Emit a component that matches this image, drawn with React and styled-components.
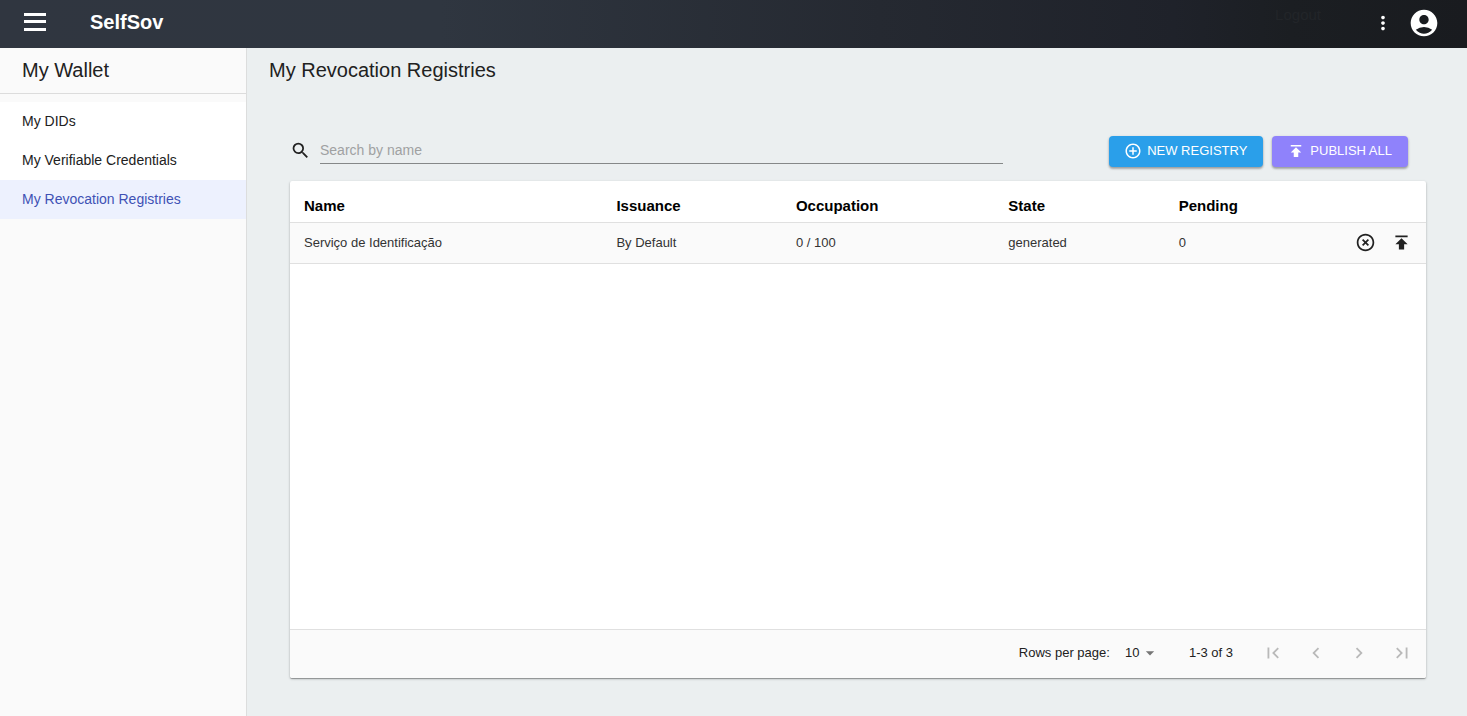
import React from "react";
import styled, { createGlobalStyle } from "styled-components";
import {
  MdSearch,
  MdMoreVert,
  MdAccountCircle,
  MdPublish,
  MdAddCircleOutline,
  MdHighlightOff,
  MdArrowDropDown,
  MdFirstPage,
  MdLastPage,
  MdChevronLeft,
  MdChevronRight,
} from "react-icons/md";

const GlobalStyle = createGlobalStyle`
  *, *::before, *::after { box-sizing: border-box; }
  body {
    margin: 0;
    background: #ebeff0;
    color: #212121;
    font-family: "Liberation Sans", Arial, sans-serif;
    font-size: 13px;
  }
  button, input, select { font: inherit; color: inherit; }
  button { cursor: pointer; }
`;

const Page = styled.div`
  display: flex;
  flex-direction: column;
  min-height: 100vh;
`;

const TopBar = styled.header`
  display: flex;
  align-items: center;
  height: 48px;
  padding: 0 24px;
  background: linear-gradient(90deg, #303640 0%, #2f3640 30%, #252931 60%, #1f222a 80%, #1b1e22 88%, #191b1f 100%);
  color: #fff;
`;

const PlainButton = styled.button`
  display: flex;
  align-items: center;
  justify-content: center;
  flex: none;
  width: ${(p) => p.$width || 36}px;
  height: 36px;
  padding: 0;
  border: 0;
  background: none;
  color: ${(p) => p.$color || "inherit"};
`;

const Brand = styled.div`
  flex: 1;
  padding: 0 0 4px 44px;
  font-size: 20px;
  line-height: 24px;
  font-weight: 700;
`;

const Logout = styled.a`
  margin-right: 44px;
  padding-bottom: 18px;
  color: #222529;
  font-size: 15px;
  line-height: 16px;
  text-decoration: none;
`;

const Account = styled.div`
  display: flex;
  gap: 5px;
  margin-right: 1px;
  padding-bottom: 2px;
`;

const Body = styled.div`
  display: flex;
  flex: 1;
`;

const Sidebar = styled.aside`
  flex: none;
  width: 247px;
  border-right: 1px solid #dcdddd;
  background: #fafafa;
`;

const Heading = styled.h2`
  margin: 0;
  padding: 0 22px;
  font-size: 20px;
  line-height: 45px;
  font-weight: 400;
`;

const SidebarHead = styled.div`
  border-bottom: 1px solid #dcdcdc;
`;

const NavList = styled.nav`
  display: flex;
  flex-direction: column;
  padding-top: 8px;
`;

const NavLink = styled.a`
  padding: 0 22px 1px;
  background: ${(p) => (p.$active ? "#edf1fe" : "#fff")};
  color: ${(p) => (p.$active ? "#3f51b5" : "#212121")};
  font-size: 14px;
  line-height: 38px;
  text-decoration: none;
`;

const Main = styled.main`
  display: flex;
  flex: 1;
  flex-direction: column;
  min-width: 0;
  padding-bottom: 38px;
`;

const Content = styled.div`
  display: flex;
  flex: 1;
  flex-direction: column;
  margin: 0 41px 0 43px;
`;

const Toolbar = styled.div`
  display: flex;
  align-items: flex-start;
  gap: 9px;
  margin: 43px 18px 14px 0;
`;

const SearchField = styled.label`
  display: flex;
  align-items: center;
  flex: 0 1 713px;
  min-width: 0;
  height: 28px;
  margin-right: auto;
`;

const SearchIcon = styled.span`
  display: flex;
  flex: none;
  width: 30px;
`;

const SearchInput = styled.input`
  flex: 1;
  min-width: 0;
  height: 28px;
  padding: 0;
  border: 0;
  border-bottom: 1px solid #858888;
  outline: none;
  background: none;
  font-size: 14px;
  &::placeholder { color: #9fa1a2; opacity: 1; }
`;

const ActionButton = styled.button`
  display: flex;
  align-items: center;
  gap: 5px;
  flex: none;
  height: 31px;
  padding: 0 16px 2px 15px;
  border: 0;
  border-radius: 4px;
  background: ${(p) => p.$color};
  color: #fff;
  font-size: 13px;
  text-transform: uppercase;
  box-shadow: 0 1px 3px rgba(0, 0, 0, 0.22), 0 2px 2px rgba(0, 0, 0, 0.2);
`;

const Card = styled.section`
  display: flex;
  flex: 1;
  flex-direction: column;
  border-radius: 2px;
  background: #fff;
  box-shadow: 0 1px 3px rgba(0, 0, 0, 0.2), 0 1px 1px rgba(0, 0, 0, 0.3);
`;

const Table = styled.table`
  width: 100%;
  border-collapse: separate;
  border-spacing: 0;
  table-layout: fixed;
`;

const HeadCell = styled.th`
  width: ${(p) => p.$width || "auto"};
  height: 42px;
  padding: 8px 14px 0;
  border-bottom: 1px solid #e0e0e0;
  color: #000;
  font-size: 15px;
  font-weight: 700;
  text-align: left;
`;

const Cell = styled.td`
  height: 41px;
  padding: 0 14px 2px;
  border-bottom: 1px solid #e0e0e0;
  background: #fafafa;
  color: #333;
`;

const RowActions = styled.div`
  display: flex;
  justify-content: flex-end;
  margin-right: -7px;
  color: #212121;
`;

const Footer = styled.footer`
  display: flex;
  align-items: center;
  justify-content: flex-end;
  height: 49px;
  margin-top: auto;
  padding: 0 3px 3px;
  border-top: 1px solid #e0e0e0;
  border-radius: 0 0 2px 2px;
  background: #fafafa;
`;

const PageSize = styled.label`
  display: flex;
  align-items: center;
  gap: 15px;
`;

const SelectBox = styled.span`
  display: flex;
  align-items: center;
  color: #757575;
`;

const Select = styled.select`
  width: 15px;
  padding: 0;
  border: 0;
  outline: none;
  background: none;
  color: #212121;
  appearance: none;
`;

const Range = styled.span`
  margin: 0 18px 0 29px;
`;

const columns = [
  { title: "Name", width: "27.5%" },
  { title: "Issuance", width: "15.8%" },
  { title: "Occupation", width: "18.7%" },
  { title: "State", width: "15%" },
  { title: "Pending" },
];

const registries = [
  { name: "Serviço de Identificação", issuance: "By Default", occupation: "0 / 100", state: "generated", pending: 0 },
];

const navItems = ["My DIDs", "My Verifiable Credentials", "My Revocation Registries"];

const pagers = [
  ["First page", MdFirstPage],
  ["Previous page", MdChevronLeft],
  ["Next page", MdChevronRight],
  ["Last page", MdLastPage],
];

export default function App() {
  return (
    <Page>
      <GlobalStyle />
      <TopBar>
        <PlainButton $width={22} aria-label="Open menu">
          <svg width="22" height="22" viewBox="0 0 22 22" fill="currentColor">
            <path d="M0 0h22v3H0zM0 7h22v3H0zM0 15h22v3H0z" />
          </svg>
        </PlainButton>
        <Brand>SelfSov</Brand>
        <Logout href="#logout">Logout</Logout>
        <Account>
          <PlainButton aria-label="More options"><MdMoreVert size={22} /></PlainButton>
          <PlainButton aria-label="Account"><MdAccountCircle size={32} /></PlainButton>
        </Account>
      </TopBar>
      <Body>
        <Sidebar>
          <SidebarHead><Heading>My Wallet</Heading></SidebarHead>
          <NavList>
            {navItems.map((item, i) => (
              <NavLink key={item} href="#wallet" $active={i === 2}>{item}</NavLink>
            ))}
          </NavList>
        </Sidebar>
        <Main>
          <Heading as="h1">My Revocation Registries</Heading>
          <Content>
            <Toolbar>
              <SearchField>
                <SearchIcon><MdSearch size={21} /></SearchIcon>
                <SearchInput type="text" placeholder="Search by name" aria-label="Search by name" />
              </SearchField>
              <ActionButton $color="#2a9fea"><MdAddCircleOutline size={18} />New registry</ActionButton>
              <ActionButton $color="#8f82fb"><MdPublish size={18} />Publish all</ActionButton>
            </Toolbar>
            <Card>
              <Table>
                <thead>
                  <tr>
                    {columns.map((c) => (
                      <HeadCell key={c.title} $width={c.width}>{c.title}</HeadCell>
                    ))}
                    <HeadCell aria-label="Actions" />
                  </tr>
                </thead>
                <tbody>
                  {registries.map((r) => (
                    <tr key={r.name}>
                      <Cell>{r.name}</Cell>
                      <Cell>{r.issuance}</Cell>
                      <Cell>{r.occupation}</Cell>
                      <Cell>{r.state}</Cell>
                      <Cell>{r.pending}</Cell>
                      <Cell>
                        <RowActions>
                          <PlainButton aria-label="Revoke"><MdHighlightOff size={21} /></PlainButton>
                          <PlainButton aria-label="Publish"><MdPublish size={21} /></PlainButton>
                        </RowActions>
                      </Cell>
                    </tr>
                  ))}
                </tbody>
              </Table>
              <Footer>
                <PageSize>
                  Rows per page:
                  <SelectBox>
                    <Select defaultValue="10">
                      <option>10</option>
                      <option>25</option>
                      <option>50</option>
                    </Select>
                    <MdArrowDropDown size={20} />
                  </SelectBox>
                </PageSize>
                <Range>1-3 of 3</Range>
                {pagers.map(([label, Icon]) => (
                  <PlainButton key={label} $width={43} $color="#b9b9b9" aria-label={label} disabled>
                    <Icon size={22} />
                  </PlainButton>
                ))}
              </Footer>
            </Card>
          </Content>
        </Main>
      </Body>
    </Page>
  );
}
